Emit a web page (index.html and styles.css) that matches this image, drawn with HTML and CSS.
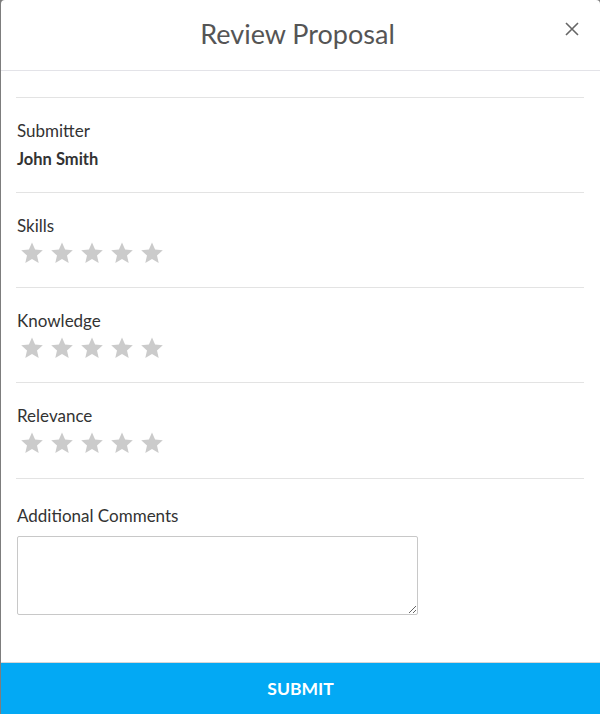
FILE: index.html
```html
<!DOCTYPE html>
<html>
<head>
	<link rel="stylesheet" href="styles.css">
</head>
<body>
	<div class="modal">
		<div class="modal-header">
			<h1>Review Proposal</h1>
			<button class="close" aria-label="Close">
				<svg width="14" height="14" viewBox="0 0 14 14"><path d="M1 1L13 13M13 1L1 13" stroke="#666" stroke-width="1.6" fill="none"/></svg>
			</button>
		</div>
		<div class="modal-body">
			<div class="section first">
				<div class="label">Submitter</div>
				<div class="value">John Smith</div>
			</div>
			<div class="section">
				<div class="label">Skills</div>
				<div class="stars">
					<svg viewBox="0 0 24 24"><path d="M12 1.5l3.1 7.1 7.7.7-5.8 5.1 1.7 7.6L12 18l-6.7 4 1.7-7.6-5.8-5.1 7.7-.7z"/></svg>
					<svg viewBox="0 0 24 24"><path d="M12 1.5l3.1 7.1 7.7.7-5.8 5.1 1.7 7.6L12 18l-6.7 4 1.7-7.6-5.8-5.1 7.7-.7z"/></svg>
					<svg viewBox="0 0 24 24"><path d="M12 1.5l3.1 7.1 7.7.7-5.8 5.1 1.7 7.6L12 18l-6.7 4 1.7-7.6-5.8-5.1 7.7-.7z"/></svg>
					<svg viewBox="0 0 24 24"><path d="M12 1.5l3.1 7.1 7.7.7-5.8 5.1 1.7 7.6L12 18l-6.7 4 1.7-7.6-5.8-5.1 7.7-.7z"/></svg>
					<svg viewBox="0 0 24 24"><path d="M12 1.5l3.1 7.1 7.7.7-5.8 5.1 1.7 7.6L12 18l-6.7 4 1.7-7.6-5.8-5.1 7.7-.7z"/></svg>
				</div>
			</div>
			<div class="section">
				<div class="label">Knowledge</div>
				<div class="stars">
					<svg viewBox="0 0 24 24"><path d="M12 1.5l3.1 7.1 7.7.7-5.8 5.1 1.7 7.6L12 18l-6.7 4 1.7-7.6-5.8-5.1 7.7-.7z"/></svg>
					<svg viewBox="0 0 24 24"><path d="M12 1.5l3.1 7.1 7.7.7-5.8 5.1 1.7 7.6L12 18l-6.7 4 1.7-7.6-5.8-5.1 7.7-.7z"/></svg>
					<svg viewBox="0 0 24 24"><path d="M12 1.5l3.1 7.1 7.7.7-5.8 5.1 1.7 7.6L12 18l-6.7 4 1.7-7.6-5.8-5.1 7.7-.7z"/></svg>
					<svg viewBox="0 0 24 24"><path d="M12 1.5l3.1 7.1 7.7.7-5.8 5.1 1.7 7.6L12 18l-6.7 4 1.7-7.6-5.8-5.1 7.7-.7z"/></svg>
					<svg viewBox="0 0 24 24"><path d="M12 1.5l3.1 7.1 7.7.7-5.8 5.1 1.7 7.6L12 18l-6.7 4 1.7-7.6-5.8-5.1 7.7-.7z"/></svg>
				</div>
			</div>
			<div class="section last">
				<div class="label">Relevance</div>
				<div class="stars">
					<svg viewBox="0 0 24 24"><path d="M12 1.5l3.1 7.1 7.7.7-5.8 5.1 1.7 7.6L12 18l-6.7 4 1.7-7.6-5.8-5.1 7.7-.7z"/></svg>
					<svg viewBox="0 0 24 24"><path d="M12 1.5l3.1 7.1 7.7.7-5.8 5.1 1.7 7.6L12 18l-6.7 4 1.7-7.6-5.8-5.1 7.7-.7z"/></svg>
					<svg viewBox="0 0 24 24"><path d="M12 1.5l3.1 7.1 7.7.7-5.8 5.1 1.7 7.6L12 18l-6.7 4 1.7-7.6-5.8-5.1 7.7-.7z"/></svg>
					<svg viewBox="0 0 24 24"><path d="M12 1.5l3.1 7.1 7.7.7-5.8 5.1 1.7 7.6L12 18l-6.7 4 1.7-7.6-5.8-5.1 7.7-.7z"/></svg>
					<svg viewBox="0 0 24 24"><path d="M12 1.5l3.1 7.1 7.7.7-5.8 5.1 1.7 7.6L12 18l-6.7 4 1.7-7.6-5.8-5.1 7.7-.7z"/></svg>
				</div>
			</div>
			<div class="comments">
				<div class="label">Additional Comments</div>
				<textarea></textarea>
			</div>
		</div>
		<button class="submit">SUBMIT</button>
	</div>
</body>
</html>
```

FILE: styles.css
```css
html, body {
	margin: 0;
	padding: 0;
	height: 100%;
	background-color: #7d7d7d;
}
body {
	font-family: Lato, "Open Sans", sans-serif;
	color: #333;
}
.modal {
	margin-left: 1px;
	height: 100%;
	background-color: #fff;
	border-radius: 4px 4px 0 0;
	display: flex;
	flex-direction: column;
}
.modal-header {
	height: 71px;
	padding-bottom: 3px;
	box-sizing: border-box;
	border-bottom: 1px solid #e3e3e8;
	display: flex;
	align-items: center;
	justify-content: center;
	position: relative;
}
.modal-header h1 {
	margin: 0 0 0 -6px;
	font-size: 27px;
	font-weight: 400;
	color: #555;
}
.close {
	position: absolute;
	right: 21px;
	top: 22px;
	border: 0;
	padding: 0;
	background: none;
	width: 14px;
	height: 14px;
}
.modal-body {
	flex: 1;
	padding: 26px 16px 0 15px;
}
.section {
	padding: 22px 2px 22px 1px;
	border-bottom: 1px solid #e3e3e3;
}
.section.first {
	border-top: 1px solid #e3e3e3;
}
.section.last {
	padding-bottom: 23px;
}
.label {
	font-size: 17px;
	line-height: 22px;
}
.value {
	margin-top: 6px;
	font-size: 16.5px;
	line-height: 22px;
	font-weight: 700;
}
.stars {
	margin-top: 6px;
	padding-left: 3px;
	display: flex;
	gap: 6px;
	height: 22px;
}
.stars svg {
	width: 24px;
	height: 24px;
	margin-top: -2px;
	fill: #cbcbcb;
}
.comments {
	padding: 26px 0 0 1px;
}
.comments textarea {
	display: block;
	margin-top: 9px;
	width: 401px;
	height: 79px;
	box-sizing: border-box;
	border: 1px solid #c8c8c8;
	border-radius: 2px;
	resize: both;
}
.submit {
	height: 52px;
	border: 0;
	border-top: 1px solid #d6d6d6;
	background-color: #03a9f4;
	color: #fff;
	font-family: inherit;
	font-size: 17.5px;
	font-weight: 700;
}
```
